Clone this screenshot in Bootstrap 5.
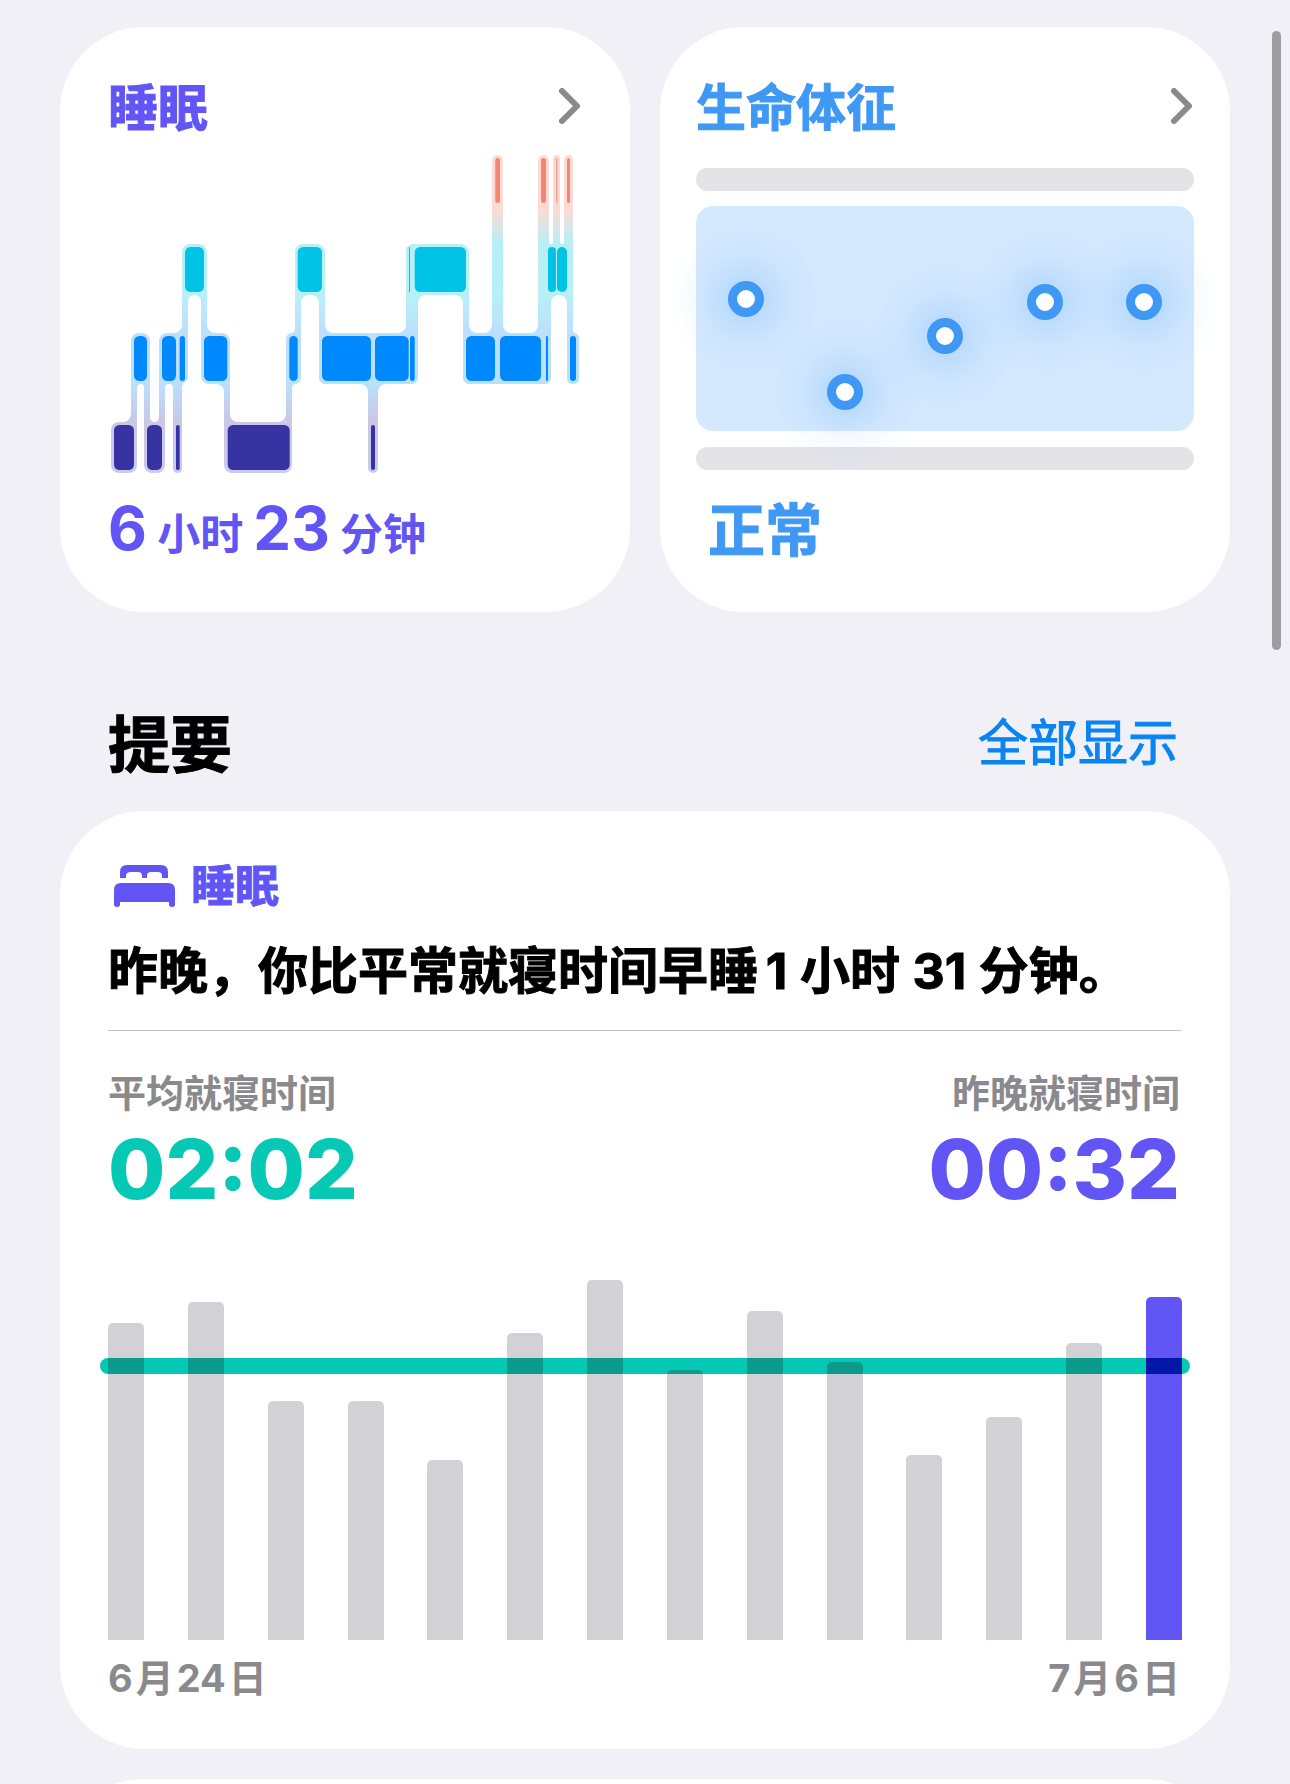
<!DOCTYPE html>
<html lang="zh-CN">
<head>
<meta charset="utf-8">
<meta name="viewport" content="width=device-width, initial-scale=1">
<title>健康</title>
<link href="https://cdn.jsdelivr.net/npm/bootstrap@5.3.0/dist/css/bootstrap.min.css" rel="stylesheet">
<style>
  :root { --purple: #6155f5; --sky: #3f98f4; --teal: #05c9b4; --gray: #8a8a8e; --bar: #d1d1d6; --band: #0b9a8b; }
  body { background: #f1f0f6; color: #000; font-family: Inter, "Noto Sans CJK SC", sans-serif; }
  .page { padding: 27px 60px 0; }
  .tiles { --bs-gutter-x: 30px; }
  .panel { border: 0; border-radius: 84px; background: #fff; }
  .tile { padding: 44px 48px 49px; }
  .tile-vitals { padding-left: 36px; padding-right: 36px; }
  .panel-sleep { padding: 44px 48px 47px; }
  .panel-next { height: 240px; margin-top: 30px; }
  .c-purple { color: var(--purple); }
  .c-sky { color: var(--sky); }
  .c-teal { color: var(--teal); }
  .c-gray { color: var(--gray); }
  .heavy { -webkit-text-stroke: 1px currentColor; }
  .tile-title { font-size: 50px; line-height: 66px; font-weight: 700; margin: 0; padding-top: 4px; }
  .inset { padding-right: 2px; }
  .tile-foot { font-size: 60px; line-height: 70px; font-weight: 700; margin: 0; }
  .foot-unit { font-size: 43px; line-height: 1; }
  .tile-foot.foot-state { font-size: 57px; line-height: 64px; padding: 6px 0 0 12px; }
  .sleep-chart { margin: 14px 0 20px; }
  .vitals-chart { margin: 27px 0 23px; overflow: visible; }
  .section-head { margin: 92px 0 29px; padding: 0 52px 0 48px; line-height: 78px; }
  .section-head h2 { font-size: 62px; line-height: 72px; font-weight: 700; margin: 0; padding-top: 6px; }
  .section-head a { font-size: 50px; color: #0a84f2; }
  .kind { font-size: 44px; line-height: 62px; font-weight: 700; gap: 16px; padding-left: 6px; margin: 0 0 18px; }
  .headline { font-size: 50px; line-height: 72px; font-weight: 700; margin: 0; }
  .rule { height: 1px; margin: 23px 0 38px; border: 0; background: #c6c6c8; opacity: 1; }
  .cap { font-size: 38px; line-height: 48px; font-weight: 700; }
  .clock { font-size: 83px; line-height: 84px; font-weight: 800; margin-top: 10px; }
  .bars { height: 360px; margin: 69px 0 14px; position: relative; }
  .bars::before { content: ""; position: absolute; left: -8px; right: -8px; bottom: 266px; height: 16px; border-radius: 8px; background: var(--teal); }
  .day { width: 36px; border-radius: 5px 5px 0 0; position: relative;
    background: linear-gradient(to top, var(--bar) 266px, var(--band) 266px 282px, var(--bar) 282px); }
  .day-last { --bar: #6155f5; --band: #0117a8; }
  .thumb { position: fixed; right: 9px; top: 31px; width: 9px; height: 619px; border-radius: 5px; background: #9d9da2; }
</style>
</head>
<body>
<main class="page vh-100 overflow-hidden">
  <div class="row tiles">
    <div class="col-6">
      <section class="card panel tile h-100">
        <a href="#sleep" class="inset d-flex justify-content-between align-items-center text-decoration-none">
          <h2 class="tile-title heavy c-purple">睡眠</h2>
          <svg width="21" height="36" viewBox="0 0 21 36" fill="none" stroke="#8a8a8e" stroke-width="6" stroke-linecap="round" stroke-linejoin="round" aria-hidden="true"><path d="M3 3 18 18 3 33"/></svg>
        </a>
        <svg class="sleep-chart w-100" viewBox="108 155 474 318" role="img" aria-label="睡眠阶段">
          <defs>
            <linearGradient id="halo" gradientUnits="userSpaceOnUse" x1="0" y1="155" x2="0" y2="473">
              <stop offset="0" stop-color="#fddbd5"/>
              <stop offset=".17" stop-color="#fddbd5"/>
              <stop offset=".28" stop-color="#b6eff6"/>
              <stop offset=".44" stop-color="#b9f0f8"/>
              <stop offset=".56" stop-color="#bcdffd"/>
              <stop offset=".72" stop-color="#b9e0fd"/>
              <stop offset=".84" stop-color="#cbc6e5"/>
              <stop offset="1" stop-color="#cbc9f0"/>
            </linearGradient>
          </defs>
          <path id="halo-shape" fill="url(#halo)"/>
          <g id="stages"></g>
        </svg>
        <p class="tile-foot c-purple">6<span class="foot-unit"> 小时 </span>23<span class="foot-unit"> 分钟</span></p>
      </section>
    </div>
    <div class="col-6">
      <section class="card panel tile tile-vitals h-100">
        <a href="#vitals" class="inset d-flex justify-content-between align-items-center text-decoration-none">
          <h2 class="tile-title heavy c-sky">生命体征</h2>
          <svg width="21" height="36" viewBox="0 0 21 36" fill="none" stroke="#8a8a8e" stroke-width="6" stroke-linecap="round" stroke-linejoin="round" aria-hidden="true"><path d="M3 3 18 18 3 33"/></svg>
        </a>
        <svg class="vitals-chart w-100" viewBox="0 0 498 302" role="img" aria-label="生命体征图表">
          <defs>
            <radialGradient id="glow">
              <stop offset="0" stop-color="#4a9ffb" stop-opacity=".25"/>
              <stop offset=".3" stop-color="#4a9ffb" stop-opacity=".16"/>
              <stop offset=".6" stop-color="#4a9ffb" stop-opacity=".05"/>
              <stop offset="1" stop-color="#4a9ffb" stop-opacity="0"/>
            </radialGradient>
          </defs>
          <rect width="498" height="23" rx="11.5" fill="#e4e3e8"/>
          <rect y="38" width="498" height="225" rx="17" fill="#d5e9fe"/>
          <rect y="279" width="498" height="23" rx="11.5" fill="#e4e3e8"/>
          <g fill="url(#glow)">
            <circle cx="50" cy="131" r="78"/><circle cx="149" cy="224" r="78"/><circle cx="249" cy="168" r="78"/><circle cx="349" cy="134" r="78"/><circle cx="448" cy="134" r="78"/>
          </g>
          <g fill="#fff" stroke="#3f98f4" stroke-width="9">
            <circle cx="50" cy="131" r="13.5"/><circle cx="149" cy="224" r="13.5"/><circle cx="249" cy="168" r="13.5"/><circle cx="349" cy="134" r="13.5"/><circle cx="448" cy="134" r="13.5"/>
          </g>
        </svg>
        <p class="tile-foot foot-state heavy c-sky">正常</p>
      </section>
    </div>
  </div>

  <div class="section-head d-flex justify-content-between align-items-center">
    <h2 class="heavy">提要</h2>
    <a href="#all" class="heavy text-decoration-none">全部显示</a>
  </div>

  <section class="card panel panel-sleep">
    <h3 class="kind c-purple d-flex align-items-center">
      <svg width="61" height="42" viewBox="0 0 61 42" fill="currentColor" aria-hidden="true">
        <path d="M6 13V7Q6 0 13 0H47Q54 0 54 7V13H48V11Q48 7 44 7H37Q33 7 33 11V13H28V11Q28 7 24 7H17Q12 7 12 11V13Z"/>
        <path d="M0 25Q0 18 7 18H54Q61 18 61 25V39.500Q61 42 58 42T55 39.500V37H6V39.500Q6 42 3 42T0 39.500Z"/>
      </svg>
      <span class="heavy">睡眠</span>
    </h3>
    <p class="headline heavy text-nowrap">昨晚，你比平常就寝时间早睡&#8201;1&#8197;小时&#8197;31&#8197;分钟。</p>
    <hr class="rule">
    <div class="d-flex justify-content-between inset">
      <div>
        <div class="cap c-gray">平均就寝时间</div>
        <div class="clock c-teal">02:02</div>
      </div>
      <div class="text-end">
        <div class="cap c-gray">昨晚就寝时间</div>
        <div class="clock c-purple">00:32</div>
      </div>
    </div>
    <div class="bars d-flex justify-content-between align-items-end">
      <div class="day" style="height:317px"></div>
      <div class="day" style="height:338px"></div>
      <div class="day" style="height:239px"></div>
      <div class="day" style="height:239px"></div>
      <div class="day" style="height:180px"></div>
      <div class="day" style="height:307px"></div>
      <div class="day" style="height:360px"></div>
      <div class="day" style="height:270px"></div>
      <div class="day" style="height:329px"></div>
      <div class="day" style="height:278px"></div>
      <div class="day" style="height:185px"></div>
      <div class="day" style="height:223px"></div>
      <div class="day" style="height:297px"></div>
      <div class="day day-last" style="height:343px"></div>
    </div>
    <div class="cap c-gray d-flex justify-content-between inset"><span>6&#8202;月&#8202;24&#8202;日</span><span>7&#8202;月&#8202;6&#8202;日</span></div>
  </section>

  <section class="card panel panel-next"></section>
</main>
<div class="thumb" aria-hidden="true"></div>

<script src="https://cdn.jsdelivr.net/npm/bootstrap@5.3.0/dist/js/bootstrap.bundle.min.js"></script>
<script>
  // Sleep stages: top edge of each row, colour, and [start, end] of each block.
  const rows = [
    [158, '#f48672', [[495.3, 500], [541, 546], [556.3, 557.3], [567, 570]]],
    [247, '#00c3e6', [[185, 204], [297.7, 322], [409, 410], [414.7, 466], [548, 556], [557, 567]]],
    [336, '#0088ff', [[134, 147], [162, 176], [179.7, 185], [204, 227.3], [289.3, 297.7], [322, 371], [375, 408.7], [410, 414.7], [466, 495], [500, 541], [546, 548], [570, 576]]],
    [425, '#3634a3', [[114, 134], [147, 162], [176, 179.7], [227.7, 289.7], [371, 375]]]
  ];
  let blocks = '';
  for (const [y, fill, spans] of rows)
    for (const [a, b] of spans)
      blocks += `<rect x="${a}" y="${y}" width="${b - a}" height="45" rx="${Math.min(5.5, (b - a) / 2)}" fill="${fill}"/>`;
  document.getElementById('stages').innerHTML = blocks;

  // Halo: rounded boxes [x1, x2, y1, radius], connectors [x1, x2, y1, y2], inner fillets [x, y, dx, dy].
  const boxes = [
    [492, 503, 155, 5.5], [538, 549, 155, 5.5], [553, 560, 155, 3.5], [564, 573, 155, 4.5],
    [182, 207, 244, 8], [295, 325, 244, 8], [406, 469, 244, 8],
    [131, 150, 333, 8], [159, 188, 333, 8], [201, 230, 333, 8], [286, 301, 333, 6], [319, 418, 333, 6], [463, 551, 333, 6], [567, 579, 333, 5],
    [111, 137, 422, 8], [144, 165, 422, 8], [173, 182, 422, 4.5], [224, 292, 422, 8], [368, 378, 422, 5]
  ];
  const links = [
    [492, 503, 180, 350], [538, 549, 180, 250], [553, 560, 180, 250], [564, 573, 180, 250], [538, 573, 244, 295], [538, 551, 290, 350], [567, 573, 290, 358],
    [182, 188, 270, 358], [201, 207, 270, 358], [295, 301, 270, 358], [319, 325, 270, 358], [406, 418, 270, 358], [463, 469, 270, 358],
    [131, 137, 358, 447], [144, 150, 358, 447], [159, 165, 358, 447], [173, 182, 358, 447], [224, 230, 358, 447], [286, 292, 358, 447], [368, 378, 358, 447],
    [406, 411, 247, 290]
  ];
  const fillets = [
    [131, 422, -8, -8], [137, 384, 3.5, 3.5], [144, 384, -3.5, 3.5], [150, 422, 4.5, -4.5], [159, 422, -4.5, -4.5],
    [165, 384, 4, 4], [173, 384, -4, 4], [182, 384, 3, 3], [182, 333, -8, -8], [188, 295, 6.5, 6.5], [201, 295, -6.5, 6.5],
    [207, 333, 8, -8], [224, 384, -8, 8], [230, 422, 8, -8], [286, 422, -8, -8], [292, 384, 4, 4], [295, 333, -4, -4],
    [301, 295, 8, 8], [319, 295, -8, 8], [325, 333, 8, -8], [368, 384, -8, 8], [378, 384, 8, 8], [406, 333, -8, -8],
    [418, 295, 8, 8], [463, 295, -8, 8], [469, 333, 8, -8], [492, 333, -8, -8], [503, 333, 8, -8], [538, 333, -8, -8],
    [551, 295, 8, 8], [567, 295, -8, 8], [573, 333, 3, -3], [549, 244, 2, -2], [553, 244, -2, -2], [560, 244, 2, -2], [564, 244, -2, -2]
  ];
  let d = '';
  for (const [a, b, y, r] of boxes)
    d += `M${a + r} ${y}H${b - r}a${r} ${r} 0 0 1 ${r} ${r}V${y + 51 - r}a${r} ${r} 0 0 1 ${-r} ${r}H${a + r}a${r} ${r} 0 0 1 ${-r} ${-r}V${y + r}a${r} ${r} 0 0 1 ${r} ${-r}Z`;
  for (const [a, b, y1, y2] of links)
    d += `M${a} ${y1}H${b}V${y2}H${a}Z`;
  // Every subpath winds clockwise so that overlaps stay filled.
  for (const [x, y, dx, dy] of fillets) {
    const r = Math.abs(dx);
    d += dx * dy > 0
      ? `M${x} ${y}h${dx}a${r} ${r} 0 0 0 ${-dx} ${dy}Z`
      : `M${x} ${y}v${dy}a${r} ${r} 0 0 0 ${dx} ${-dy}Z`;
  }
  document.getElementById('halo-shape').setAttribute('d', d);
</script>
</body>
</html>
